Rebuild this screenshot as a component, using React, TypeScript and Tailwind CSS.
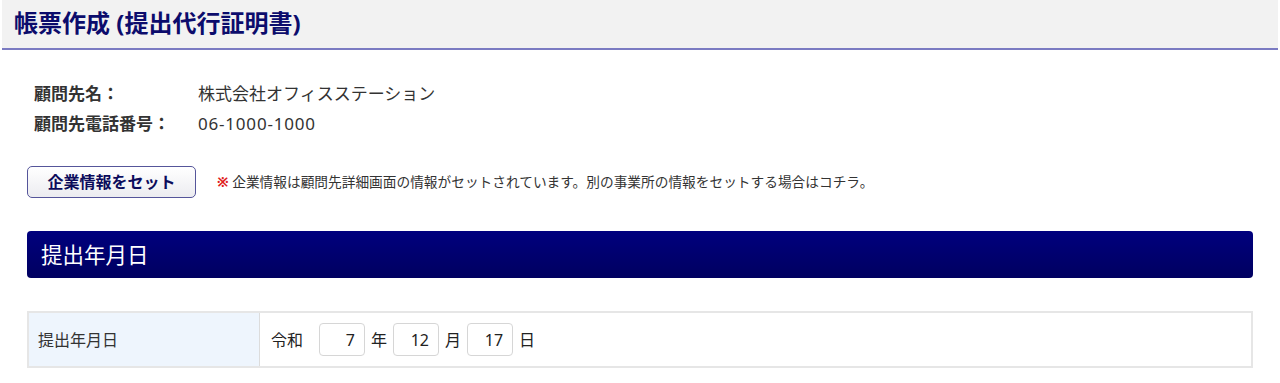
import React from "react"

const FONT = { fontFamily: '"Noto Sans", "Noto Sans CJK JP", sans-serif' }

const DateBox = ({ value }: { value: string }) => (
  <div className="w-[46px] h-[33px] border border-[#d6d6d6] rounded-[4px] bg-white flex items-center justify-end pr-[9px] text-[16px] text-[#222]">
    {value}
  </div>
)

export default function App() {
  return (
    <div className="w-[1280px] h-[383px] bg-white overflow-hidden" style={FONT}>
      {/* page title */}
      <div className="mx-[2px] h-[50px] bg-[#f2f2f2] border-b-2 border-[#7b7bc2] flex items-center pl-[12px]">
        <h1 className="text-[24px] font-bold text-[#0c0c6c] leading-none pb-[3px]">帳票作成 (提出代行証明書)</h1>
      </div>

      <div className="px-[27px]">
        {/* client info */}
        <div className="pl-[7px] pt-[32px] grid grid-cols-[164px_1fr] gap-y-[7px] text-[17px] text-[#333] leading-[23px]">
          <div className="font-bold">顧問先名：</div>
          <div>株式会社オフィスステーション</div>
          <div className="font-bold">顧問先電話番号：</div>
          <div className="tracking-[0.8px]">06-1000-1000</div>
        </div>

        {/* company info button */}
        <div className="mt-[31px] flex items-center gap-[21px]">
          <button className="w-[169px] h-[32px] rounded-[5px] border border-[#55559a] bg-gradient-to-b from-white to-[#ececf0] text-[16px] font-bold text-[#0c0c5c]">
            企業情報をセット
          </button>
          <p className="text-[13.7px] text-[#333]">
            <span className="text-[#e02020] font-bold">※</span> 企業情報は顧問先詳細画面の情報がセットされています。別の事業所の情報をセットする場合はコチラ。
          </p>
        </div>

        {/* section heading */}
        <div className="mt-[33px] h-[47px] rounded-[4px] bg-gradient-to-b from-[#00007e] to-[#000060] flex items-center pl-[14px]">
          <h2 className="text-[21.5px] text-white leading-none">提出年月日</h2>
        </div>

        {/* table */}
        <div className="mt-[33px] border-2 border-[#e6e6e6] flex h-[57px]">
          <div className="w-[231px] bg-[#eef5fd] border-r border-[#dcdcdc] flex items-center pl-[9px] text-[16px] text-[#333]">
            提出年月日
          </div>
          <div className="flex-1 flex items-center pl-[11px] gap-[6px] text-[16px] text-[#222]">
            <span className="mr-[10px]">令和</span>
            <DateBox value="7" />
            <span>年</span>
            <DateBox value="12" />
            <span>月</span>
            <DateBox value="17" />
            <span>日</span>
          </div>
        </div>
      </div>
    </div>
  )
}
